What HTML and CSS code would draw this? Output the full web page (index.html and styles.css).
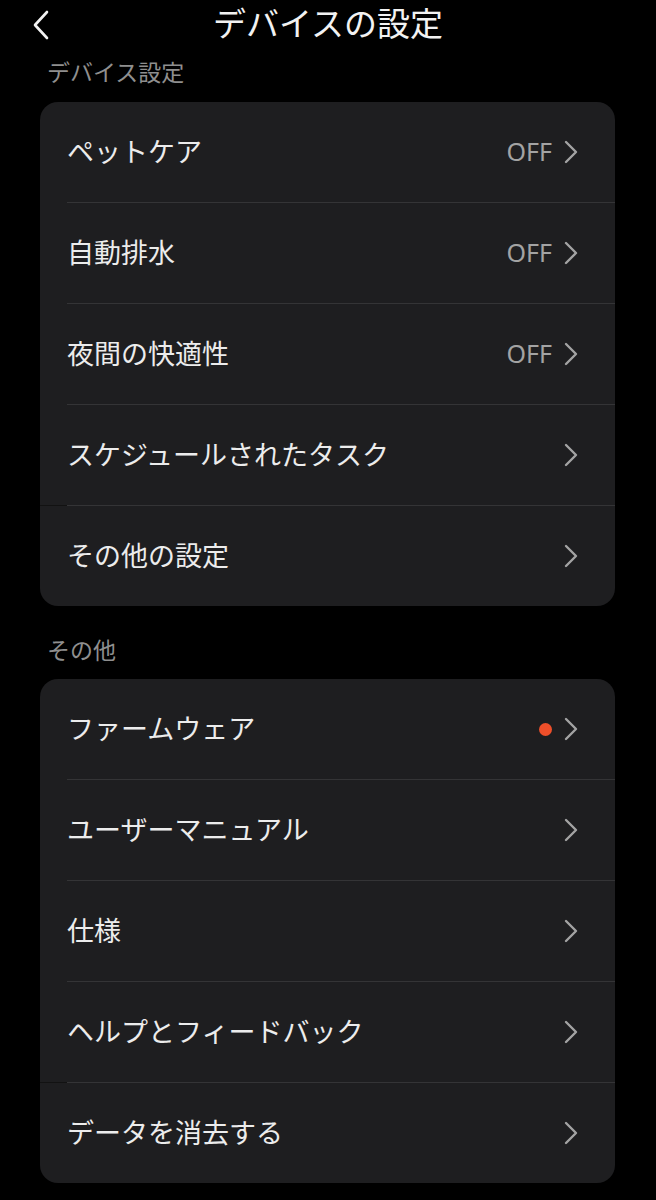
FILE: index.html
```html
<!DOCTYPE html>
<html lang="ja">
  <head>
    <meta charset="UTF-8" />
    <meta name="viewport" content="width=device-width, initial-scale=1.0" />
    <title>デバイスの設定</title>
    <link rel="stylesheet" href="styles.css">
  </head>
  <body>
    <div id="header">
      <div class="back">
        <svg width="18" height="30" viewBox="0 0 18 30">
          <path d="M15 2 L3 15 L15 28" fill="none" stroke="#f2f2f2" stroke-width="2.6" stroke-linecap="round" stroke-linejoin="round" />
        </svg>
      </div>
      <h1>デバイスの設定</h1>
      <div></div>
    </div>

    <!-- device settings -->
    <div class="section-label first">デバイス設定</div>
    <div class="card">
      <div class="row">
        <span class="label">ペットケア</span>
        <span class="value">OFF</span>
        <svg class="chev" width="14" height="24" viewBox="0 0 14 24"><path d="M2 2 L12 12 L2 22" /></svg>
      </div>
      <div class="sep"></div>
      <div class="row">
        <span class="label">自動排水</span>
        <span class="value">OFF</span>
        <svg class="chev" width="14" height="24" viewBox="0 0 14 24"><path d="M2 2 L12 12 L2 22" /></svg>
      </div>
      <div class="sep"></div>
      <div class="row">
        <span class="label">夜間の快適性</span>
        <span class="value">OFF</span>
        <svg class="chev" width="14" height="24" viewBox="0 0 14 24"><path d="M2 2 L12 12 L2 22" /></svg>
      </div>
      <div class="sep"></div>
      <div class="row">
        <span class="label">スケジュールされたタスク</span>
        <svg class="chev" width="14" height="24" viewBox="0 0 14 24"><path d="M2 2 L12 12 L2 22" /></svg>
      </div>
      <div class="sep full"></div>
      <div class="row">
        <span class="label">その他の設定</span>
        <svg class="chev" width="14" height="24" viewBox="0 0 14 24"><path d="M2 2 L12 12 L2 22" /></svg>
      </div>
    </div>

    <!-- others -->
    <div class="section-label">その他</div>
    <div class="card">
      <div class="row">
        <span class="label">ファームウェア</span>
        <span class="dot"></span>
        <svg class="chev" width="14" height="24" viewBox="0 0 14 24"><path d="M2 2 L12 12 L2 22" /></svg>
      </div>
      <div class="sep"></div>
      <div class="row">
        <span class="label">ユーザーマニュアル</span>
        <svg class="chev" width="14" height="24" viewBox="0 0 14 24"><path d="M2 2 L12 12 L2 22" /></svg>
      </div>
      <div class="sep"></div>
      <div class="row">
        <span class="label">仕様</span>
        <svg class="chev" width="14" height="24" viewBox="0 0 14 24"><path d="M2 2 L12 12 L2 22" /></svg>
      </div>
      <div class="sep"></div>
      <div class="row">
        <span class="label">ヘルプとフィードバック</span>
        <svg class="chev" width="14" height="24" viewBox="0 0 14 24"><path d="M2 2 L12 12 L2 22" /></svg>
      </div>
      <div class="sep full"></div>
      <div class="row">
        <span class="label">データを消去する</span>
        <svg class="chev" width="14" height="24" viewBox="0 0 14 24"><path d="M2 2 L12 12 L2 22" /></svg>
      </div>
    </div>
  </body>
</html>
```

FILE: styles.css
```css
body {
  margin: 0;
  background: #000;
  color: #ececec;
  font-family: "Noto Sans CJK JP", "Noto Sans", sans-serif;
}

#header {
  height: 50px;
  display: grid;
  grid-template-columns: 1fr auto 1fr;
  align-items: center;
}
#header h1 {
  margin: 0;
  padding-bottom: 5px;
  font-size: 33px;
  font-weight: 400;
  line-height: 45px;
  color: #f2f2f2;
}
.back {
  padding-left: 32px;
  display: flex;
  align-items: center;
}

.section-label {
  padding-left: 47px;
  padding-bottom: 3px;
  font-size: 23px;
  line-height: 27px;
  color: #8f8f8f;
  margin: 30px 0 13px;
}
.section-label.first {
  margin: 8px 0 14px;
}

.card {
  margin: 0 41px 0 40px;
  background: #1e1e20;
  border-radius: 18px;
}

.row {
  height: 100px;
  display: flex;
  align-items: center;
  padding: 0 37px 0 27px;
}
.row .label {
  flex: 1;
  font-size: 27px;
  line-height: 1;
  padding-bottom: 4px;
}
.row .value {
  font-family: "Noto Sans", sans-serif;
  font-size: 25px;
  color: #a3a3a3;
  margin-right: 12px;
  padding-bottom: 2px;
}
.chev path {
  fill: none;
  stroke: #a3a3a3;
  stroke-width: 2.4;
  stroke-linecap: round;
  stroke-linejoin: round;
}
.dot {
  width: 13px;
  height: 13px;
  border-radius: 50%;
  background: #ee4f2a;
  margin-right: 12px;
}

.sep {
  height: 1px;
  margin-left: 27px;
  background: #343436;
}
.sep.full {
  margin-left: 0;
  background: linear-gradient(to right, #121212 27px, #343436 27px);
}
```
